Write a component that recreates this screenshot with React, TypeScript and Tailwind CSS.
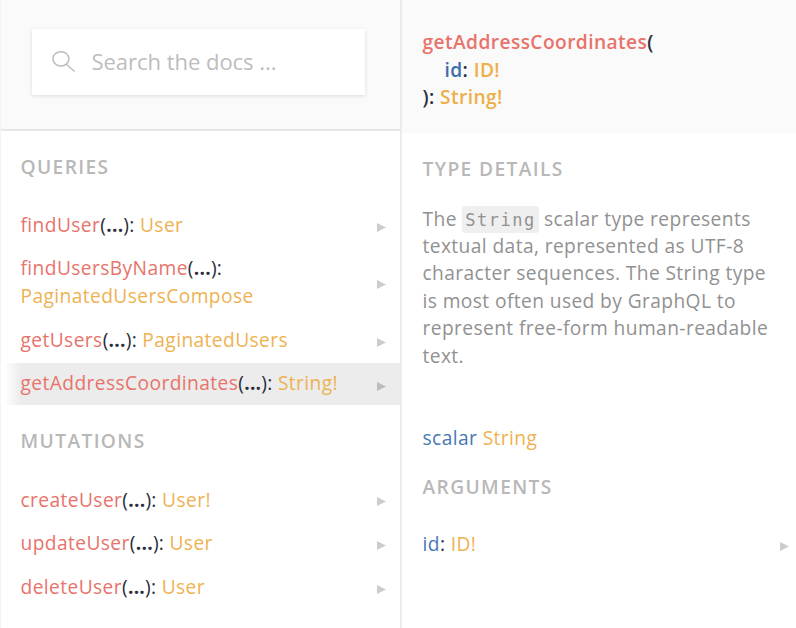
import type { ReactNode } from "react";

type Field = {
  name: string;
  type: string;
  row: string;
  label: string;
  wrap?: boolean;
  active?: boolean;
};

const queries: Field[] = [
  { name: "findUser", type: "User", row: "h-[42px]", label: "pb-0" },
  { name: "findUsersByName", type: "PaginatedUsersCompose", row: "h-[72px]", label: "pb-[1px]", wrap: true },
  { name: "getUsers", type: "PaginatedUsers", row: "mb-[1px] h-[44px]", label: "pb-[1px]" },
  { name: "getAddressCoordinates", type: "String!", row: "h-[42px]", label: "pb-[2px]", active: true },
];

const mutations: Field[] = [
  { name: "createUser", type: "User!", row: "h-[43px]", label: "pb-0" },
  { name: "updateUser", type: "User", row: "h-[44px]", label: "pb-[1px]" },
  { name: "deleteUser", type: "User", row: "h-[44px]", label: "pb-[1px]" },
];

function Arrow() {
  return (
    <svg className="mt-[4px] h-[9px] w-[9px] shrink-0" viewBox="0 0 9 9">
      <path d="M0 0 L9 4.5 L0 9 Z" fill="#000" fillOpacity="0.2" />
    </svg>
  );
}

function Heading({ children, className }: { children: ReactNode; className: string }) {
  return (
    <h2 className={`text-[19.2px] leading-[27px] font-semibold tracking-[1.37px] text-[#b8b8b8] ${className}`}>
      {children}
    </h2>
  );
}

function FieldRow({ field }: { field: Field }) {
  return (
    <div
      className={`flex items-center justify-between pr-[14px] pl-[19.5px] ${field.row} ${
        field.active ? "bg-linear-to-r from-white from-[3px] to-[#ececec] to-[20px]" : ""
      }`}
    >
      <div className={`leading-[27.4px] whitespace-nowrap ${field.label}`}>
        <span className="text-[#e8736b]">{field.name}</span>
        <span className="tracking-[0.25px] text-[#2a2e3a]">
          <span>(</span>
          <span className="font-bold">...</span>
          <span>):</span>
        </span>{" "}
        {field.wrap && <br />}
        <span className="text-[#eeb252]">{field.type}</span>
      </div>
      <Arrow />
    </div>
  );
}

export default function App() {
  return (
    <div className="flex h-[628px] w-[796px] overflow-hidden bg-white font-['Open_Sans',sans-serif] text-[19.2px] tracking-[0.4px]">
      <aside className="flex w-[402px] shrink-0 flex-col border-r-2 border-l border-r-[#ebebeb] border-l-[#f0f4f4]">
        <div className="h-[131px] border-b-2 border-[#e6e6e6] bg-[#fafafa] pt-[29px] pl-[31px]">
          <div className="flex h-[66px] w-[333px] items-center bg-white pl-[20px] shadow-[0_1px_4px_rgba(0,0,0,0.12)]">
            <svg className="mb-[2px] h-[23px] w-[25px]" viewBox="0 0 25 23" fill="none" stroke="#bdbdbd" strokeWidth="1.5">
              <ellipse cx="8.9" cy="8.8" rx="8" ry="7.1" />
              <path d="M14 14 L22.6 21.5" />
            </svg>
            <span className="mb-[2px] ml-[14.5px] text-[22px] tracking-[-0.03px] text-[#bdbdbd]">
              Search the docs ...
            </span>
          </div>
        </div>
        <Heading className="mt-[22px] ml-[19.5px]">QUERIES</Heading>
        <div className="mt-[24px]">
          {queries.map((f) => (
            <FieldRow key={f.name} field={f} />
          ))}
        </div>
        <Heading className="mt-[22px] ml-[19.5px]">MUTATIONS</Heading>
        <div className="mt-[24px]">
          {mutations.map((f) => (
            <FieldRow key={f.name} field={f} />
          ))}
        </div>
      </aside>
      <main className="flex min-w-0 flex-1 flex-col">
        <div className="h-[133px] bg-[#fafafa] pt-[28.4px] pl-[20.5px] leading-[27.4px] font-semibold text-[#2a2e3a]">
          <div>
            <span className="text-[#e8736b]">getAddressCoordinates</span>(
          </div>
          <div className="pl-[22px]">
            <span className="text-[#3c6cae]">id</span>: <span className="text-[#eeae48]">ID!</span>
          </div>
          <div>
            ): <span className="text-[#eeae48]">String!</span>
          </div>
        </div>
        <Heading className="mt-[22px] ml-[20.5px]">TYPE DETAILS</Heading>
        <p className="mt-[22.6px] ml-[20.5px] w-[360px] leading-[27.4px] text-[#919191]">
          The{" "}
          <code className="rounded-[3px] bg-[#efefef] px-[3px] py-[3.5px] font-['DejaVu_Sans_Mono',monospace] text-[17px] leading-none tracking-[1.5px]">
            String
          </code>{" "}
          scalar type represents
          <br />
          textual data, represented as UTF-8
          <br />
          character sequences. The String type
          <br />
          is most often used by GraphQL to
          <br />
          represent free-form human-readable
          <br />
          text.
        </p>
        <div className="mt-[54.6px] ml-[20.5px] leading-[27.4px]">
          <span className="text-[#4878b3]">scalar</span> <span className="text-[#eeb252]">String</span>
        </div>
        <Heading className="mt-[22px] ml-[20.5px]">ARGUMENTS</Heading>
        <div className="mt-[23px] flex h-[42px] items-center justify-between pr-[7px] pl-[20.5px]">
          <div className="text-[#2a2e3a]">
            <span className="text-[#4878b3]">id</span>: <span className="text-[#eeb252]">ID!</span>
          </div>
          <Arrow />
        </div>
      </main>
    </div>
  );
}
